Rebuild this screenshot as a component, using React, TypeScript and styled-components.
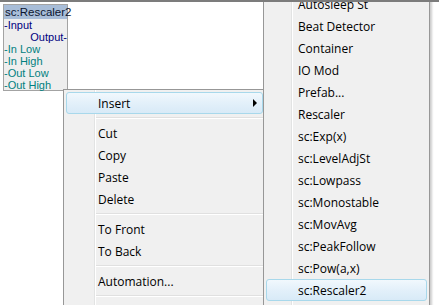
import styled, { createGlobalStyle } from 'styled-components';

const GlobalStyle = createGlobalStyle`
  html, body {
    margin: 0;
    padding: 0;
    background: #ffffff;
    overflow: hidden;
  }
`;

const Canvas = styled.div`
  position: relative;
  width: 439px;
  height: 305px;
  overflow: hidden;
  background: #ffffff;
  border-top: 2px solid #7c7c7c;
  box-sizing: border-box;
`;

const ModuleBox = styled.div`
  position: absolute;
  left: 3px;
  top: 2px;
  width: 63px;
  height: 85px;
  border: 1px solid #a3a3a3;
  background: #eeeeee;
  font-family: 'Liberation Sans', Arial, sans-serif;
  font-size: 11px;
  display: flex;
  flex-direction: column;
`;

const ModuleHeader = styled.div`
  height: 14px;
  line-height: 14px;
  background: #a8bdd8;
  color: #0b1530;
  padding-left: 1px;
  white-space: nowrap;
  font-size: 11.5px;
`;

const PortRow = styled.div<{ $color: string; $right?: boolean }>`
  height: 12px;
  line-height: 12px;
  color: ${(p) => p.$color};
  text-align: ${(p) => (p.$right ? 'right' : 'left')};
  white-space: nowrap;
  &:first-of-type {
    margin-top: 1px;
  }
`;

const Menu = styled.div<{ $left: number; $top: number; $width: number; $height: number; $gutter: number }>`
  position: absolute;
  left: ${(p) => p.$left}px;
  top: ${(p) => p.$top}px;
  width: ${(p) => p.$width}px;
  height: ${(p) => p.$height}px;
  box-sizing: border-box;
  background: #f0f0f0;
  border: 1px solid #979797;
  box-shadow: 2px 2px 2px rgba(0, 0, 0, 0.2);
  padding: 2px;
  font-family: 'Open Sans', 'Noto Sans', sans-serif;
  font-size: 12px;
  color: #000000;
  display: flex;
  flex-direction: column;

  &::before {
    content: '';
    position: absolute;
    top: 0;
    bottom: 0;
    left: ${(p) => p.$gutter}px;
    width: 1px;
    background: #e2e3e3;
    border-right: 1px solid #ffffff;
  }
`;

const Item = styled.div<{ $active?: boolean; $indent: number }>`
  position: relative;
  z-index: 1;
  height: 22px;
  box-sizing: border-box;
  display: flex;
  align-items: center;
  padding-left: ${(p) => p.$indent}px;
  border: 1px solid ${(p) => (p.$active ? '#a8d8eb' : 'transparent')};
  border-radius: 3px;
  background: ${(p) =>
    p.$active ? 'linear-gradient(to bottom, #f1f8fd 0%, #e3f0fa 50%, #d8eaf7 100%)' : 'transparent'};
  white-space: nowrap;
`;

const Label = styled.span`
  flex: 1;
`;

const Arrow = styled.span`
  width: 0;
  height: 0;
  margin-right: 5px;
  border-top: 4px solid transparent;
  border-bottom: 4px solid transparent;
  border-left: 4px solid #000000;
`;

const Separator = styled.div<{ $start: number }>`
  position: relative;
  z-index: 1;
  height: 8px;
  display: flex;
  flex-direction: column;
  justify-content: center;
  padding-left: ${(p) => p.$start}px;

  &::after {
    content: '';
    display: block;
    height: 1px;
    background: #e0e0e0;
    border-bottom: 1px solid #ffffff;
  }
`;

const ports = [
  { text: '-Input', color: '#000080' },
  { text: 'Output-', color: '#000080', right: true },
  { text: '-In Low', color: '#008080' },
  { text: '-In High', color: '#008080' },
  { text: '-Out Low', color: '#008080' },
  { text: '-Out High', color: '#008080' },
];

const mainItems: (string | null)[] = [
  'Insert',
  null,
  'Cut',
  'Copy',
  'Paste',
  'Delete',
  null,
  'To Front',
  'To Back',
  null,
  'Automation...',
  null,
];

const insertItems = [
  'Autosleep St',
  'Beat Detector',
  'Container',
  'IO Mod',
  'Prefab...',
  'Rescaler',
  'sc:Exp(x)',
  'sc:LevelAdjSt',
  'sc:Lowpass',
  'sc:Monostable',
  'sc:MovAvg',
  'sc:PeakFollow',
  'sc:Pow(a,x)',
  'sc:Rescaler2',
];

export default function App() {
  return (
    <>
      <GlobalStyle />
      <Canvas>
        <ModuleBox>
          <ModuleHeader>sc:Rescaler2</ModuleHeader>
          {ports.map((p) => (
            <PortRow key={p.text} $color={p.color} $right={p.right}>
              {p.text}
            </PortRow>
          ))}
        </ModuleBox>

        <Menu $left={63} $top={87} $width={203} $height={260} $gutter={30}>
          {mainItems.map((m, i) =>
            m === null ? (
              <Separator key={i} $start={30} />
            ) : (
              <Item key={i} $indent={31} $active={m === 'Insert'}>
                <Label>{m}</Label>
                {m === 'Insert' && <Arrow />}
              </Item>
            )
          )}
        </Menu>

        <Menu $left={263} $top={-12} $width={167} $height={340} $gutter={27}>
          {insertItems.map((m) => (
            <Item key={m} $indent={31} $active={m === 'sc:Rescaler2'}>
              <Label>{m}</Label>
            </Item>
          ))}
        </Menu>
      </Canvas>
    </>
  );
}
